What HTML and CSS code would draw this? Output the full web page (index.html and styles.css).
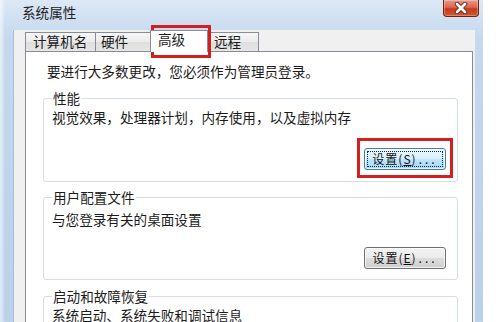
FILE: index.html
```html
<!DOCTYPE html>
<html lang="zh-CN">
  <head>
    <meta charset="UTF-8" />
    <meta name="viewport" content="width=device-width, initial-scale=1.0" />
    <title>系统属性</title>
    <link rel="stylesheet" href="styles.css">
  </head>
  <body>
    <div class="window">
      <div class="titlebar">
        <span class="title">系统属性</span>
        <button class="close" title="关闭">
          <svg width="18" height="12" viewBox="0 0 18 12">
            <path d="M5 2 L13 10 M13 2 L5 10" stroke="#4e1e14" stroke-width="4.4" stroke-linecap="round" />
            <path d="M5 2 L13 10 M13 2 L5 10" stroke="#ffffff" stroke-width="2.8" stroke-linecap="round" />
          </svg>
        </button>
      </div>

      <div class="dialog">
        <div class="tabs">
          <div class="tab tab-name">计算机名</div>
          <div class="tab tab-hw">硬件</div>
          <div class="tab tab-adv active">高级</div>
          <div class="tab tab-remote">远程</div>
        </div>

        <div class="panel">
          <p class="notice">要进行大多数更改，您必须作为管理员登录。</p>

          <fieldset class="group group-perf">
            <legend>性能</legend>
            <p class="desc">视觉效果，处理器计划，内存使用，以及虚拟内存</p>
            <div class="actions">
              <button class="btn focused">设置(<u>S</u>)<span class="dots">...</span></button>
            </div>
          </fieldset>

          <fieldset class="group group-profile">
            <legend>用户配置文件</legend>
            <p class="desc">与您登录有关的桌面设置</p>
            <div class="actions">
              <button class="btn">设置(<u>E</u>)<span class="dots">...</span></button>
            </div>
          </fieldset>

          <fieldset class="group group-startup">
            <legend>启动和故障恢复</legend>
            <p class="desc">系统启动、系统失败和调试信息</p>
          </fieldset>
        </div>
      </div>

      <!-- red highlight marks drawn over the dialog -->
      <div class="mark mark-tab"></div>
      <div class="mark mark-btn"></div>
    </div>
  </body>
</html>
```

FILE: styles.css
```css
body {
  margin: 0;
  background: #fff;
  font-family: "Noto Sans CJK SC", "Noto Sans", sans-serif;
  color: #1b1b1b;
}
.window {
  position: relative;
  width: 483px;
  height: 322px;
  overflow: hidden;
  background: linear-gradient(to bottom, #dce8f5 0, #c4d8ee 40px, #bad1ea 100%);
  box-shadow: inset 4px 0 3px -1px rgba(255, 255, 255, 0.55);
}
.titlebar {
  display: flex;
  justify-content: space-between;
  align-items: flex-start;
  height: 21px;
}
.title {
  padding: 3px 0 0 22px;
  font-size: 13.6px;
  line-height: 18px;
  color: #222;
}
.close {
  width: 36px;
  height: 17px;
  margin-right: 4px;
  padding: 0;
  border: 1px solid #6e2214;
  border-top: none;
  border-radius: 0 0 4px 4px;
  background: linear-gradient(to bottom, #e8998a 0, #dc664d 45%, #c63a1c 55%, #d0572b 100%);
  box-shadow: inset 0 0 0 1px rgba(255, 255, 255, 0.3);
  display: flex;
  align-items: center;
  justify-content: center;
}
.dialog {
  margin: 0 8px 0 13px;
  height: 301px;
  background: #f0f0f0;
  border-left: 1px solid #a9bed6;
  box-sizing: border-box;
}
.tabs {
  display: flex;
  align-items: flex-end;
  height: 21px;
  margin-top: 9px;
  padding-left: 11px;
  font-size: 13.6px;
}
.tab {
  position: relative;
  box-sizing: border-box;
  height: 19px;
  padding-left: 7px;
  line-height: 17px;
  border: 1px solid #898c95;
  border-bottom: none;
  margin-right: -1px;
  background: linear-gradient(to bottom, #f6f6f6 0, #ebebeb 50%, #dedede 51%, #e6e6e6 100%);
  white-space: nowrap;
}
.tab-name {
  width: 71px;
}
.tab-hw {
  width: 56px;
  padding-left: 5px;
}
.tab-adv {
  width: 58px;
}
.tab-remote {
  width: 52px;
  padding-left: 6px;
}
.tab.active {
  z-index: 1;
  height: 22px;
  margin-bottom: -1px;
  line-height: 16px;
  background: #fff;
}
.panel {
  box-sizing: border-box;
  width: 448px;
  height: 280px;
  margin-left: 11px;
  padding: 10px 14px 0 17px;
  background: #fff;
  border: 1px solid #898c95;
  font-size: 13.6px;
  line-height: 18px;
}
.notice {
  margin: 0 0 9px 4px;
}
.group {
  margin: 0;
  padding: 1px 11px 11px 8px;
  border: 1px solid #d5dfe5;
  border-radius: 3px;
}
.group legend {
  padding: 0 1px;
}
.desc {
  margin: 0;
}
.group-perf {
  margin-bottom: 6px;
}
.group-perf .actions {
  margin-top: 22px;
}
.group-profile {
  padding-top: 4px;
  padding-bottom: 10px;
  margin-bottom: 7px;
}
.group-profile .actions {
  margin-top: 19px;
}
.actions {
  display: flex;
  justify-content: flex-end;
}
.btn {
  box-sizing: border-box;
  width: 82px;
  height: 22px;
  padding: 0;
  border: 1px solid #707070;
  border-radius: 3px;
  background: linear-gradient(to bottom, #f2f2f2 0, #ebebeb 50%, #dddddd 51%, #cfcfcf 100%);
  box-shadow: inset 0 0 0 1px rgba(255, 255, 255, 0.7);
  font-family: "Noto Sans CJK SC", sans-serif;
  font-size: 12px;
  line-height: 18px;
  letter-spacing: 1px;
  color: #111;
}
.btn u {
  text-decoration: underline;
}
.btn .dots {
  letter-spacing: 3px;
  margin-left: 2px;
}
.btn.focused {
  border-color: #3c7fb1;
  background: linear-gradient(to bottom, #eaf6fd 0, #d9f0fc 50%, #bee6fd 51%, #a7d9f5 100%);
  outline: 1px dotted #222;
  outline-offset: -4px;
}
.mark {
  position: absolute;
  border: 3px solid #d3201f;
  box-sizing: border-box;
}
.mark-tab {
  left: 151px;
  top: 25px;
  width: 60px;
  height: 33px;
}
.mark-btn {
  left: 357px;
  top: 138px;
  width: 96px;
  height: 40px;
}
```
